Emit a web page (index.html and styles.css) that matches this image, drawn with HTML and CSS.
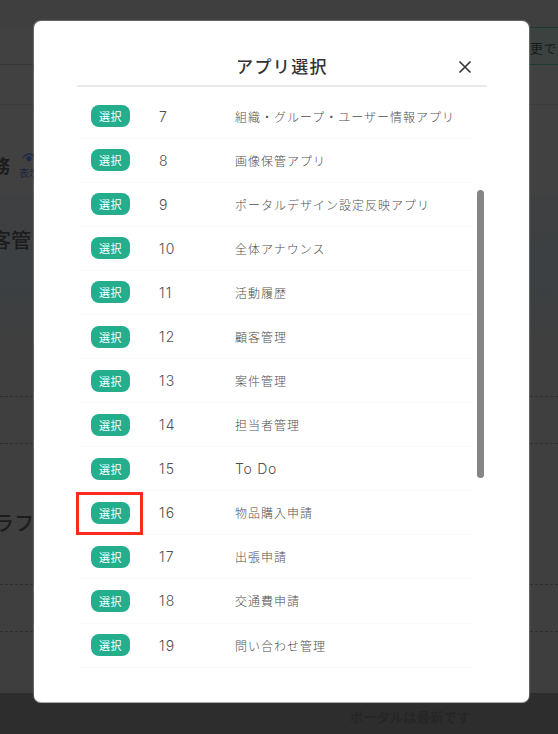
FILE: index.html
```html
<!DOCTYPE html>
<html lang="ja">
<head>
<meta charset="utf-8">
<title>アプリ選択</title>
<link rel="stylesheet" href="styles.css">
</head>
<body>
<div class="page">
  <div class="band band-top"></div>
  <div class="band band-action"><div class="action-btn"><span class="action-text">更で</span></div></div>
  <div class="band band-blank"></div>
  <div class="band band-title">
    <span class="clip-title">務</span>
    <div class="visibility">
      <svg class="eye" viewBox="0 0 14 10" width="14" height="10"><path d="M1 5C3 1.8 5 1 7 1s4 .8 6 4" fill="none" stroke="#1d2a4a" stroke-width="1.3"/><circle cx="7" cy="5.5" r="2.6" fill="#1d2a4a"/></svg>
      <span class="visibility-label">表示</span>
    </div>
  </div>
  <div class="band band-panel"><span class="clip-heading">客管</span></div>
  <div class="band band-dash"></div>
  <div class="band band-graph"><span class="clip-heading">ラフ</span></div>
  <div class="band band-dash"></div>
  <div class="band band-fill"></div>
  <footer class="footer">ポータルは最新です</footer>
</div>
<div class="overlay">
  <section class="modal">
    <header class="modal-head">
      <h2 class="modal-title">アプリ選択</h2>
      <button class="close" aria-label="閉じる"><svg viewBox="0 0 14 14" width="14" height="14"><path d="M1.5 1.5l11 11M12.5 1.5l-11 11" fill="none" stroke="#333" stroke-width="1.6"/></svg></button>
    </header>
    <div class="list">
      <div class="row"><button class="pick">選択</button><span class="num">7</span><span class="name">組織・グループ・ユーザー情報アプリ</span></div>
      <div class="row"><button class="pick">選択</button><span class="num">8</span><span class="name">画像保管アプリ</span></div>
      <div class="row"><button class="pick">選択</button><span class="num">9</span><span class="name">ポータルデザイン設定反映アプリ</span></div>
      <div class="row"><button class="pick">選択</button><span class="num">10</span><span class="name">全体アナウンス</span></div>
      <div class="row"><button class="pick">選択</button><span class="num">11</span><span class="name">活動履歴</span></div>
      <div class="row"><button class="pick">選択</button><span class="num">12</span><span class="name">顧客管理</span></div>
      <div class="row"><button class="pick">選択</button><span class="num">13</span><span class="name">案件管理</span></div>
      <div class="row"><button class="pick">選択</button><span class="num">14</span><span class="name">担当者管理</span></div>
      <div class="row"><button class="pick">選択</button><span class="num">15</span><span class="name latin">To Do</span></div>
      <div class="row"><button class="pick">選択</button><span class="num">16</span><span class="name">物品購入申請</span></div>
      <div class="row"><button class="pick">選択</button><span class="num">17</span><span class="name">出張申請</span></div>
      <div class="row"><button class="pick">選択</button><span class="num">18</span><span class="name">交通費申請</span></div>
      <div class="row"><button class="pick">選択</button><span class="num">19</span><span class="name">問い合わせ管理</span></div>
      <div class="scrollbar"></div>
      <div class="highlight"></div>
    </div>
  </section>
</div>
</body>
</html>
```
FILE: styles.css
```css
* { box-sizing: border-box; }
html, body { margin: 0; height: 100%; overflow: hidden; }
body {
  width: 558px;
  height: 734px;
  position: relative;
  background: #3f3f3f;
  font-family: "Noto Sans CJK JP", "Noto Sans", sans-serif;
}
.page { height: 734px; display: flex; flex-direction: column; overflow: hidden; }
.band { flex: none; position: relative; }
.band-top { height: 27px; background: #3f3f3f; }
.band-action {
  height: 38px;
  background: #414141;
  border-bottom: 1px solid #383838;
  display: flex;
  justify-content: flex-end;
}
.action-btn {
  width: 40px;
  height: 38px;
  background: #3c4240;
  border-top: 1px solid #1f3a33;
  border-bottom: 1px solid #1f3a33;
  padding-left: 12px;
  line-height: 36px;
  overflow: hidden;
}
.action-text { color: #1a1a1a; font-size: 13px; white-space: nowrap; letter-spacing: .5px; }
.band-blank { height: 40px; background: #414141; border-bottom: 1px solid #3b3b3b; }
.band-title { height: 91px; background: #414141; display: flex; align-items: flex-start; }
.clip-title { font-size: 18px; font-weight: 700; color: #1c1c1c; margin: 48px 0 0 -8px; line-height: 24px; }
.visibility { display: flex; flex-direction: column; align-items: center; gap: 3px; margin: 48px 0 0 9px; width: 20px; }
.visibility-label { font-size: 10px; line-height: 13px; color: #1b2440; white-space: nowrap; }
.band-panel { height: 201px; background: linear-gradient(#3f4041, #3c4042 40%, #3f3f3f 75%); border-bottom: 1px dashed #2f2f2f; }
.clip-heading { position: absolute; font-size: 20px; font-weight: 500; line-height: 28px; color: #1c1c1c; left: -9px; top: 30px; white-space: nowrap; }
.band-dash { height: 47px; background: #3f3f3f; border-bottom: 1px dashed #2f2f2f; }
.band-graph { height: 141px; background: #3f3f3f; border-bottom: 1px dashed #2f2f2f; }
.band-graph .clip-heading { top: 65px; left: -6px; }
.band-fill { height: 61px; background: #3e3e3e; }
.footer {
  flex: 1;
  background: #2d2d2d;
  color: #262626;
  font-size: 13px;
  font-weight: 700;
  padding: 14px 0 0 350px;
  line-height: 20px;
  letter-spacing: .4px;
  white-space: nowrap;
}
.overlay { position: absolute; inset: 0; }
.modal {
  position: absolute;
  left: 33.5px;
  top: 21px;
  width: 495px;
  height: 681px;
  background: #fff;
  border-radius: 7px;
  box-shadow: 0 1px 0 #a8a8a8, 0 0 1px 1px rgba(150,150,150,.5);
  padding: 0 41.5px 0 43.5px;
}
.modal-head {
  height: 66px;
  border-bottom: 2px solid #e9e9e9;
  position: relative;
  display: flex;
  align-items: center;
  justify-content: center;
}
.modal-title {
  margin: 24px 0 0;
  font-size: 17px;
  line-height: 24px;
  font-weight: 500;
  letter-spacing: 1.4px;
  color: #333;
  position: relative;
  top: 1px;
}
.close {
  position: absolute;
  right: 15px;
  top: 39px;
  border: 0;
  padding: 0;
  background: none;
  line-height: 0;
}
.list { position: relative; padding-top: 7.6px; width: 396px; }
.row {
  height: 44.08px;
  display: flex;
  align-items: center;
  border-bottom: 1px solid #fafafa;
  padding-left: 14px;
  color: #4f4f4f;
  font-size: 12px;
  font-weight: 300;
  letter-spacing: 1px;
}
.pick {
  width: 39px;
  height: 22px;
  border: 0;
  border-radius: 8px;
  background: #24ae8e;
  color: #fff;
  font: 400 11px "Noto Sans CJK JP", sans-serif;
  letter-spacing: .6px;
  padding: 0;
  flex: none;
}
.num { width: 76px; margin-left: 29px; flex: none; font: 300 14px Inter, sans-serif; letter-spacing: 1.3px; }
.name { white-space: nowrap; }
.latin { font: 300 14px Inter, sans-serif; letter-spacing: .7px; }
.scrollbar {
  position: absolute;
  left: 400px;
  top: 103px;
  width: 7px;
  height: 288px;
  border-radius: 4px;
  background: #858585;
}
.highlight {
  position: absolute;
  left: -1px;
  top: 405px;
  width: 67px;
  height: 43px;
  border: 3.5px solid #ff2a1f;
}
```
